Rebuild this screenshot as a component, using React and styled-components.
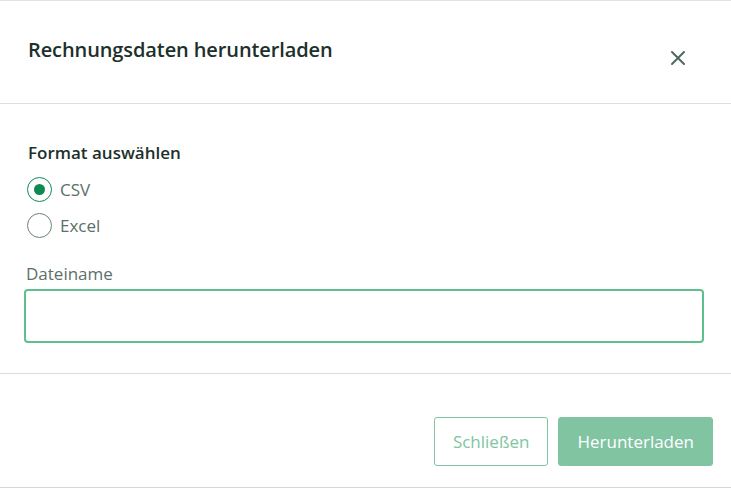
import React, { useState } from "react";
import styled, { createGlobalStyle } from "styled-components";

const Global = createGlobalStyle`
  html, body { margin: 0; padding: 0; background: #fff; }
  body { font-family: "Open Sans", "Noto Sans", sans-serif; }
  * { box-sizing: border-box; }
`;

const Modal = styled.div`
  width: 731px;
  height: 488px;
  border-top: 1px solid #dfe3e2;
  border-bottom: 1px solid #d6d6d6;
  display: flex;
  flex-direction: column;
  background: #fff;
`;

const Header = styled.div`
  height: 103px;
  border-bottom: 1px solid #dcdfde;
  display: flex;
  align-items: flex-start;
  justify-content: space-between;
  padding: 35px 43px 0 28px;
`;

const Title = styled.h2`
  margin: 0;
  font-size: 20px;
  line-height: 28px;
  font-weight: 600;
  color: #1d302b;
  letter-spacing: -0.1px;
`;

const CloseButton = styled.button`
  border: none;
  background: none;
  padding: 0;
  margin-top: 12px;
  width: 20px;
  height: 20px;
  display: flex;
  align-items: center;
  justify-content: center;
  cursor: pointer;
`;

const Body = styled.div`
  height: 270px;
  border-bottom: 1px solid #dcdcdc;
  padding: 36px 26px 0 24px;
  display: flex;
  flex-direction: column;
`;

const SectionLabel = styled.div`
  font-size: 17px;
  line-height: 26px;
  font-weight: 600;
  color: #1d302b;
  padding-left: 4px;
  margin-bottom: 5px;
`;

const RadioRow = styled.label`
  display: flex;
  align-items: center;
  gap: 8px;
  height: 36px;
  font-size: 17px;
  color: #5a706a;
  cursor: pointer;
  padding-left: 3px;
`;

const RadioCircle = styled.span`
  width: 25px;
  height: 25px;
  border-radius: 50%;
  border: 1.5px solid ${(p) => (p.$checked ? "#118a56" : "#6e7f7a")};
  display: flex;
  align-items: center;
  justify-content: center;
  &::after {
    content: "";
    width: 11px;
    height: 11px;
    border-radius: 50%;
    background: ${(p) => (p.$checked ? "#0d8a52" : "transparent")};
  }
`;

const FieldLabel = styled.div`
  font-size: 17px;
  line-height: 24px;
  color: #5a706a;
  margin-top: 19px;
  padding-left: 2px;
  margin-bottom: 3px;
`;

const Input = styled.input`
  display: block;
  width: 680px;
  height: 54px;
  border: 2px solid #5cbf8c;
  border-radius: 4px;
  outline: none;
  font-size: 17px;
  padding: 0 12px;
  font-family: inherit;
  flex-shrink: 0;
`;

const Footer = styled.div`
  flex: 1;
  display: flex;
  justify-content: flex-end;
  align-items: flex-start;
  gap: 10px;
  padding: 43px 18px 0 0;
`;

const Button = styled.button`
  height: 49px;
  padding: 0 18px;
  border-radius: 3px;
  font-family: inherit;
  font-size: 17px;
  cursor: pointer;
  border: 1px solid #80c4a2;
  background: ${(p) => (p.$primary ? "#80c4a2" : "#fff")};
  color: ${(p) => (p.$primary ? "#fff" : "#80c4a2")};
`;

export default function App() {
  const [fmt, setFmt] = useState("csv");
  return (
    <>
      <Global />
      <Modal>
        <Header>
          <Title>Rechnungsdaten herunterladen</Title>
          <CloseButton aria-label="close">
            <svg width="16" height="16" viewBox="0 0 16 16">
              <path d="M2 2 L14 14 M14 2 L2 14" stroke="#4d6a62" strokeWidth="2" strokeLinecap="round" />
            </svg>
          </CloseButton>
        </Header>
        <Body>
          <SectionLabel>Format auswählen</SectionLabel>
          <RadioRow onClick={() => setFmt("csv")}>
            <RadioCircle $checked={fmt === "csv"} />
            CSV
          </RadioRow>
          <RadioRow onClick={() => setFmt("excel")}>
            <RadioCircle $checked={fmt === "excel"} />
            Excel
          </RadioRow>
          <FieldLabel>Dateiname</FieldLabel>
          <Input />
        </Body>
        <Footer>
          <Button>Schließen</Button>
          <Button $primary>Herunterladen</Button>
        </Footer>
      </Modal>
    </>
  );
}
